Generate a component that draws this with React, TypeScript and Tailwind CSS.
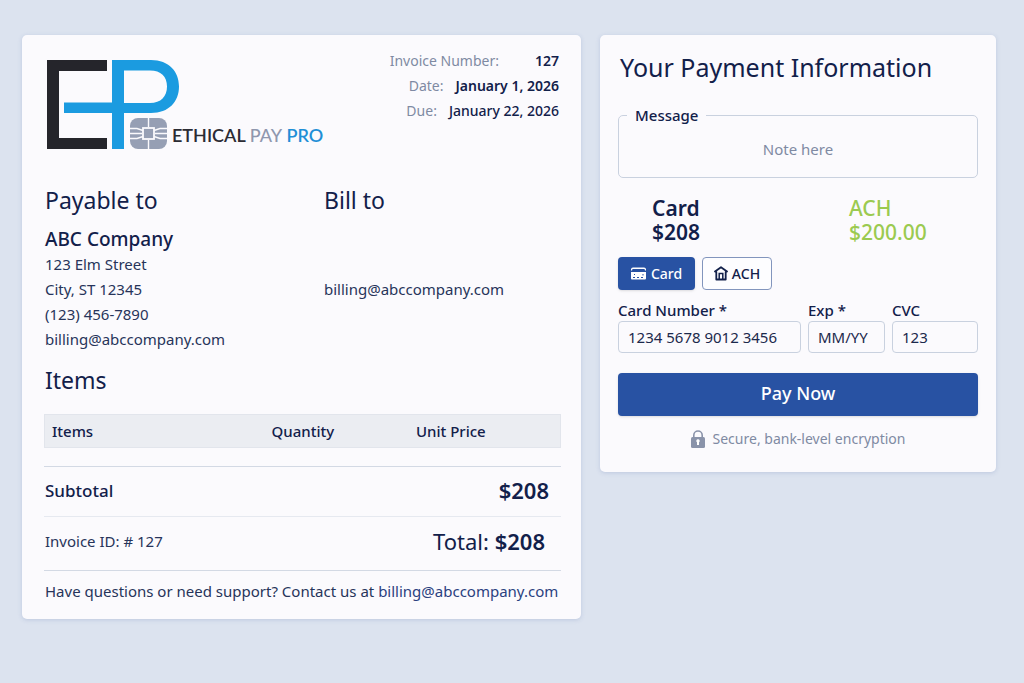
import React from "react";

function Monogram() {
  return (
    <svg viewBox="0 0 132 89" className="h-[89px] w-[132px] shrink-0" role="img" aria-label="Ethical Pay Pro">
      <rect x="0" y="0" width="12" height="89" fill="#25252b" />
      <rect x="0" y="0" width="60" height="11" fill="#25252b" />
      <rect x="0" y="78" width="60" height="11" fill="#25252b" />
      <rect x="65" y="0" width="12" height="89" fill="#1b9be0" />
      <path
        fill="#1b9be0"
        fillRule="evenodd"
        d="M65 0H104C122 0 132 11.500 132 26.500S122 53 104 53H17V42.500H65ZM77 10.500V43H103C114 43 120 36.500 120 26.500S114 10.500 103 10.500Z"
      />
      <rect x="83" y="58" width="37" height="31" rx="8" fill="#969fb4" />
      <g fill="none" stroke="#fbfafd" strokeWidth="1.400">
        <path d="M101.500 58V67M101.500 80V89" />
        <path d="M83 68.500H90L96 70.500M83 78.500H90L96 76.500M120 68.500H113L107 70.500M120 78.500H113L107 76.500M83 73.500H95M108 73.500H120" />
        <rect x="96" y="68" width="11" height="11" strokeWidth="1.800" />
      </g>
    </svg>
  );
}

function CardIcon() {
  return (
    <svg viewBox="0 0 15 13" className="h-[13px] w-[15px]" aria-hidden="true">
      <path fill="#fff" d="M2 0.500H13Q15 0.500 15 2.500V3.500H14L13.500 2H1.500L1 3.500H0V2.500Q0 0.500 2 0.500Z" />
      <path fill="#fff" fillRule="evenodd" d="M0 5H15V11.500Q15 12.500 14 12.500H1Q0 12.500 0 11.500ZM2 10V11H4V10ZM6 10V11H8V10ZM3 7V8H4V7ZM11.500 7V8.500H12.500V7ZM10 10V11H12V10Z" />
    </svg>
  );
}

function HouseIcon() {
  return (
    <svg viewBox="0 0 14 15" className="h-[15px] w-[14px]" aria-hidden="true" fill="none" stroke="#12204a">
      <path strokeWidth="1.800" strokeLinejoin="round" strokeLinecap="round" d="M1 5.500L7 1.200L13 5.500M2.300 5.500V13.500H11.700V5.500" />
      <path strokeWidth="1.500" d="M5.200 13.500V7.500H8.800V13.500" />
    </svg>
  );
}

function LockIcon() {
  return (
    <svg viewBox="0 0 14 18" className="h-[18px] w-[14px]" aria-hidden="true">
      <path fill="none" stroke="#8a93aa" strokeWidth="1.600" d="M2.800 8V5.200A4.200 4.200 0 0 1 11.200 5.200V8" />
      <rect y="7" width="14" height="11" rx="1.500" fill="#8a93aa" />
      <path fill="#fff" d="M7 9.200A1.700 1.700 0 0 1 8 12.300V15H6V12.300A1.700 1.700 0 0 1 7 9.200Z" />
    </svg>
  );
}

const cardClass = "rounded-[5px] bg-[#fbfafd] shadow-[0_1px_4px_rgba(120,140,190,0.3)]";
const inputClass =
  "h-8 w-full min-w-0 rounded-[4px] border border-[#c9d1df] bg-transparent px-[9px] text-[15px] text-[#1c294c] outline-none placeholder:text-[#1c294c]";

function Invoice() {
  return (
    <section className={`${cardClass} pt-[13px] pr-5 pb-[15px] pl-[22px] text-[15px] leading-[25px] text-[#27345a]`}>
      <header className="flex justify-between pr-[2px]">
        <div className="flex items-end pt-3 pl-[3px]">
          <Monogram />
          <p className="-ml-[7px] pb-[2px] font-['Lato'] text-[18px] leading-6 font-semibold whitespace-nowrap text-[#2b2b33]">
            ETHICAL <span className="font-medium text-[#8f97ae]">PAY</span>{" "}
            <span className="text-[#1f8fd6]">PRO</span>
          </p>
        </div>
        <dl className="text-right text-sm leading-[25px] text-[#7f8aa3]">
          <div className="flex justify-end gap-9">
            <dt>Invoice Number:</dt>
            <dd className="font-semibold text-[#12204a]">127</dd>
          </div>
          <div className="flex justify-end gap-3">
            <dt>Date:</dt>
            <dd className="font-semibold text-[#12204a]">January 1, 2026</dd>
          </div>
          <div className="flex justify-end gap-3">
            <dt>Due:</dt>
            <dd className="font-medium text-[#12204a]">January 22, 2026</dd>
          </div>
        </dl>
      </header>

      <div className="mt-[35px] grid grid-cols-[279fr_237fr] pl-px">
        <div>
          <h2 className="mb-[11px] text-[23px] leading-8 text-[#12204a]">Payable to</h2>
          <p className="text-[19px] font-medium text-[#12204a]">ABC Company</p>
          <p>123 Elm Street</p>
          <p>City, ST 12345</p>
          <p>(123) 456-7890</p>
          <p>billing@abccompany.com</p>
        </div>
        <div>
          <h2 className="mb-[61px] text-[23px] leading-8 text-[#12204a]">Bill to</h2>
          <p>billing@abccompany.com</p>
        </div>
      </div>

      <h2 className="mt-3 pl-px text-[23px] leading-8 text-[#12204a]">Items</h2>
      <table className="mt-[18px] mb-[18px] w-full table-fixed border border-[#e2e5ec] bg-[#ebedf2] text-left text-[#12204a]">
        <thead>
          <tr className="h-[33px]">
            <th className="w-[44%] pl-[7px] font-medium">Items</th>
            <th className="w-[28%] font-medium">Quantity</th>
            <th className="font-medium">Unit Price</th>
          </tr>
        </thead>
      </table>

      <div className="flex h-[50px] items-center justify-between border-t border-[#d3d9e4] pr-3 pb-[2px] pl-px text-[#12204a]">
        <span className="text-[17px] font-medium">Subtotal</span>
        <span className="text-[22px] font-semibold">$208</span>
      </div>
      <div className="flex h-[54px] items-center justify-between border-t border-[#e6e9f0] pr-4 pb-1 pl-px">
        <span>Invoice ID: # 127</span>
        <span className="text-[22px] text-[#12204a]">
          Total: <strong className="font-semibold">$208</strong>
        </span>
      </div>
      <p className="border-t border-[#d3d9e4] pt-2 pl-px">
        Have questions or need support? Contact us at{" "}
        <a href="mailto:billing@abccompany.com" className="text-[#2a4180]">
          billing@abccompany.com
        </a>
      </p>
    </section>
  );
}

function Payment() {
  return (
    <form className={`${cardClass} px-[18px] pt-[15px] pb-[22px] text-[#12204a]`} onSubmit={(e) => e.preventDefault()}>
      <h1 className="pl-[2px] text-[25px] leading-[34px]">Your Payment Information</h1>
      <fieldset className="mt-5 rounded-[5px] border border-[#c9d1df] px-2 pb-[14px]">
        <legend className="px-2 text-[15px] leading-[22px] font-medium">
          <label htmlFor="message">Message</label>
        </legend>
        <input
          id="message"
          placeholder="Note here"
          className="mt-[9px] h-7 w-full bg-transparent text-center text-[15px] outline-none placeholder:text-[#7f8aa3]"
        />
      </fieldset>

      <dl className="mt-[18px] grid grid-cols-[197fr_129fr] pl-[34px] text-[21px] leading-6">
        <div className="font-semibold">
          <dt>Card</dt>
          <dd>$208</dd>
        </div>
        <div className="font-medium text-[#9bca50]">
          <dt>ACH</dt>
          <dd>$200.00</dd>
        </div>
      </dl>

      <div className="mt-[13px] flex gap-[7px] text-sm font-medium">
        <button
          type="button"
          className="flex h-[33px] w-[77px] items-center justify-center gap-[5px] rounded-[4px] bg-[#2852a3] text-white shadow-sm"
        >
          <CardIcon />
          Card
        </button>
        <button
          type="button"
          className="flex h-[33px] w-[70px] items-center justify-center gap-1 rounded-[4px] border border-[#8295bd] bg-[#fdfdff]"
        >
          <HouseIcon />
          ACH
        </button>
      </div>

      <div className="mt-[9px] grid grid-cols-[183fr_77fr_86fr] gap-[7px] text-[15px] leading-[22px] font-medium">
        <label>
          Card Number *
          <input className={`${inputClass} font-normal`} defaultValue="1234 5678 9012 3456" />
        </label>
        <label>
          Exp *
          <input className={`${inputClass} font-normal`} placeholder="MM/YY" />
        </label>
        <label>
          CVC
          <input className={`${inputClass} font-normal`} defaultValue="123" />
        </label>
      </div>

      <button
        type="submit"
        className="mt-[20px] h-[43px] w-full rounded-[4px] bg-[#2852a3] pb-1 text-lg font-medium text-white shadow-sm"
      >
        Pay Now
      </button>
      <p className="mt-3 flex items-center justify-center gap-2 text-sm leading-[22px] text-[#7f8aa3]">
        <LockIcon />
        Secure, bank-level encryption
      </p>
    </form>
  );
}

export default function App() {
  return (
    <main className="grid min-h-screen grid-cols-[559fr_396fr] items-start gap-[19px] bg-[#dce3ef] pt-[35px] pr-7 pb-16 pl-[22px] font-['Noto_Sans',sans-serif]">
      <Invoice />
      <Payment />
    </main>
  );
}
